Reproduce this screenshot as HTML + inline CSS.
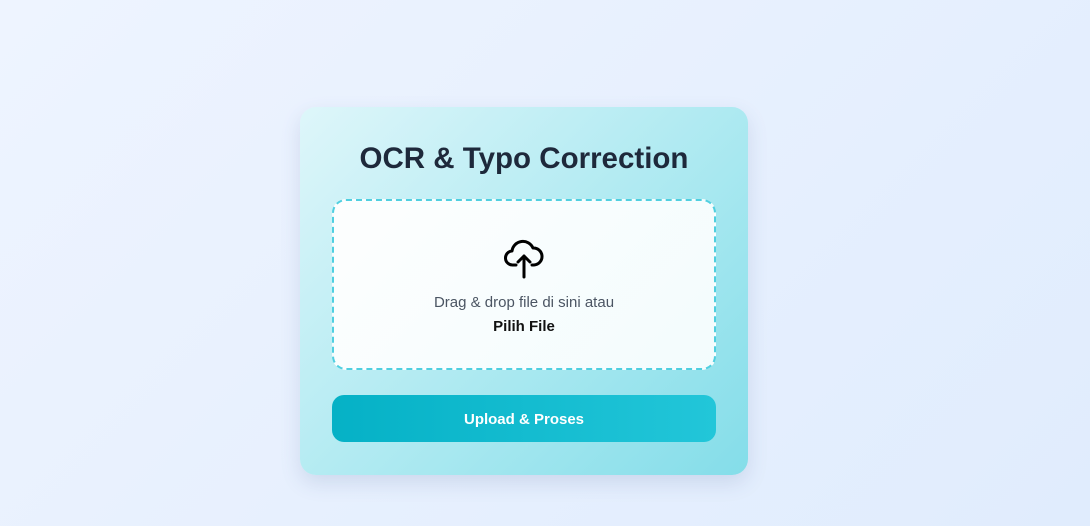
<!DOCTYPE html>
<html><head><style>
html,body{margin:0;width:1090px;height:526px;overflow:hidden;font-family:"Liberation Sans",sans-serif;background:linear-gradient(135deg,#eef4ff,#e0ecfd);}
.card{position:absolute;left:300px;top:107px;width:448px;height:368px;border-radius:16px;background:linear-gradient(135deg,#def6fa,#a8e8f0 60%,#84dde9);box-shadow:0 8px 20px rgba(60,90,140,0.15);}
h1{position:absolute;top:36px;left:0;width:100%;margin:0;text-align:center;font-size:29.5px;font-weight:bold;color:#1e293b;line-height:32px;}
.drop{position:absolute;left:32px;top:92px;width:380px;height:167px;border:2px dashed #4fcfe0;border-radius:14px;background:linear-gradient(135deg,#fdfefe,#f3fcfd);}
.t1{position:absolute;top:93px;width:100%;text-align:center;font-size:15px;color:#4b5563;}
.t2{position:absolute;top:117px;width:100%;text-align:center;font-size:15px;font-weight:bold;color:#111;}
.btn{position:absolute;left:32px;top:288px;width:384px;height:47px;border-radius:12px;background:linear-gradient(90deg,#05b1c6,#22c6d9);color:#fff;font-weight:bold;font-size:15px;text-align:center;line-height:49px;}
svg{position:absolute;left:168px;top:33px;}
</style></head><body>
<div class="card">
<h1>OCR &amp; Typo Correction</h1>
<div class="drop">
<svg width="44" height="46" viewBox="0 0 44 46" fill="none" stroke="#000" stroke-width="3" stroke-linecap="round" stroke-linejoin="round">
<path d="M14 31 H11 A7 7 0 0 1 10 17 A11 11 0 0 1 31 14 A7 7 0 0 1 32 31 H30"/>
<path d="M22 43 V22 M16 28 L22 22 L28 28"/>
</svg>
<div class="t1">Drag &amp; drop file di sini atau</div>
<div class="t2">Pilih File</div>
</div>
<div class="btn">Upload &amp; Proses</div>
</div>
</body></html>
